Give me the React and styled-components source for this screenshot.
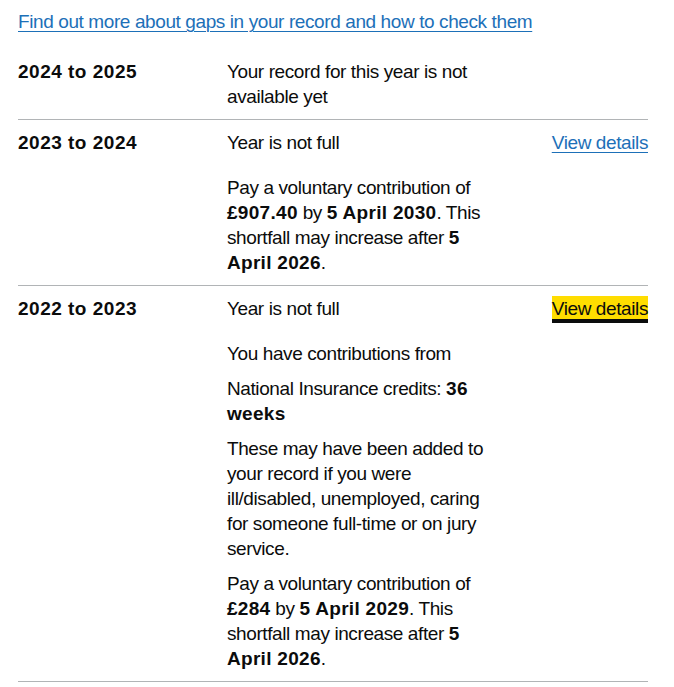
import React from "react";
import styled, { createGlobalStyle } from "styled-components";

const GlobalStyle = createGlobalStyle`
  body {
    margin: 0;
    background: #ffffff;
  }
`;

const Page = styled.main`
  padding: 9px 26px 0 18px;
  font-family: "Liberation Sans", Arial, sans-serif;
  font-size: 19px;
  line-height: 25px;
  letter-spacing: -0.4px;
  color: #0b0c0c;
`;

const Intro = styled.p`
  margin: 0 0 15px;
`;

const Link = styled.a`
  color: ${(props) => (props.$focused ? "#0b0c0c" : "#1d70b8")};
  text-decoration: ${(props) => (props.$focused ? "none" : "underline")};
  text-decoration-thickness: 1px;
  text-underline-offset: 0.1578em;
  background: ${(props) => (props.$focused ? "#ffdd00" : "transparent")};
  box-shadow: ${(props) =>
    props.$focused ? "0 -2px #ffdd00, 0 4px #0b0c0c" : "none"};
  outline: none;
`;

const SummaryList = styled.dl`
  margin: 0;
`;

const Row = styled.div`
  display: grid;
  grid-template-columns: 189px 270px 1fr;
  column-gap: 20px;
  padding: 10px 0;
  border-bottom: 1px solid #b1b4b6;
`;

const Key = styled.dt`
  margin: 0;
  font-weight: 700;
  letter-spacing: 0.5px;
`;

const Value = styled.dd`
  margin: 0;
`;

const Actions = styled.dd`
  margin: 0;
  text-align: right;
`;

const Status = styled.p`
  margin: 0 0 20px;

  &:last-child {
    margin-bottom: 0;
  }
`;

const Text = styled.p`
  margin: 0 0 10px;

  &:last-child {
    margin-bottom: 0;
  }
`;

const B = styled.strong`
  font-weight: 700;
  letter-spacing: 0.3px;
`;

function Shortfall({ amount, payBy }) {
  return (
    <Text>
      Pay a voluntary contribution of <B>{amount}</B> by <B>{payBy}</B>. This
      shortfall may increase after <B>5 April 2026</B>.
    </Text>
  );
}

export default function App() {
  return (
    <>
      <GlobalStyle />
      <Page>
        <Intro>
          <Link href="#">
            Find out more about gaps in your record and how to check them
          </Link>
        </Intro>
        <SummaryList>
          <Row>
            <Key>2024 to 2025</Key>
            <Value>
              <Status>Your record for this year is not available yet</Status>
            </Value>
          </Row>
          <Row>
            <Key>2023 to 2024</Key>
            <Value>
              <Status>Year is not full</Status>
              <Shortfall amount="£907.40" payBy="5 April 2030" />
            </Value>
            <Actions>
              <Link href="#">View details</Link>
            </Actions>
          </Row>
          <Row>
            <Key>2022 to 2023</Key>
            <Value>
              <Status>Year is not full</Status>
              <Text>You have contributions from</Text>
              <Text>
                National Insurance credits: <B>36 weeks</B>
              </Text>
              <Text>
                These may have been added to your record if you were
                ill/disabled, unemployed, caring for someone full-time or on
                jury service.
              </Text>
              <Shortfall amount="£284" payBy="5 April 2029" />
            </Value>
            <Actions>
              <Link href="#" $focused>
                View details
              </Link>
            </Actions>
          </Row>
        </SummaryList>
      </Page>
    </>
  );
}
